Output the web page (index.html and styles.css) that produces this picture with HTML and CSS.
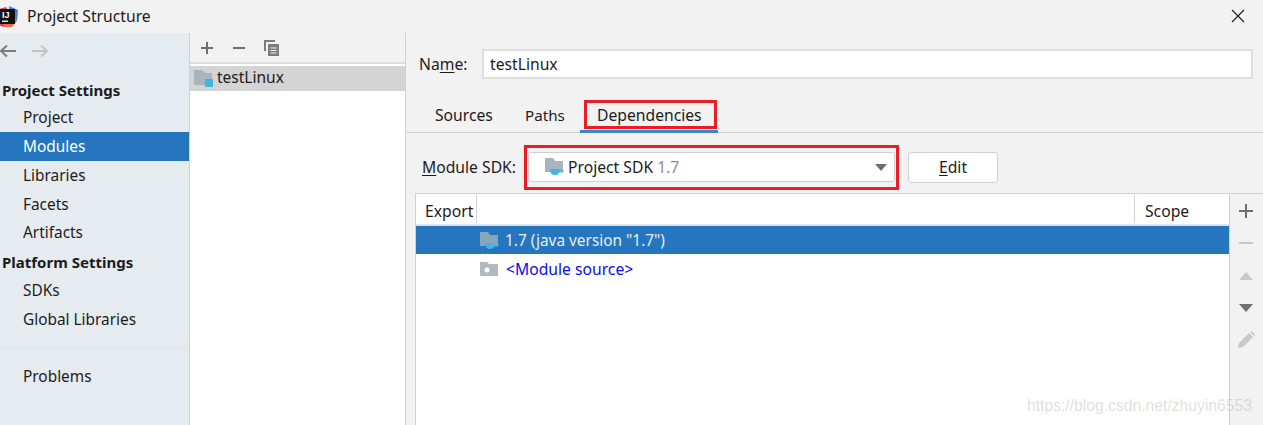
FILE: index.html
```html
<!DOCTYPE html>
<html lang="en">
<head>
<meta charset="utf-8">
<title>Project Structure</title>
<link rel="stylesheet" href="styles.css">
</head>
<body>
<div class="window">
  <header class="titlebar">
    <svg class="logo" width="18" height="22" viewBox="0 0 18 22"><path d="M-1 3 L6 1 L10 8 L3 21 L-1 19Z" fill="#e3386f"/><path d="M9 0 L18 4 L17 15 L10 8Z" fill="#3f7fe0"/><path d="M3 21 L12 21 L17 15 L10 6Z" fill="#f26a3d"/><rect x="0" y="3" width="15" height="15" fill="#111"/><text class="logo-text" x="2" y="12">IJ</text><rect x="2" y="14.500" width="6" height="1.500" fill="#ddd"/></svg>
    <span class="title">Project Structure</span>
    <svg class="close" width="14" height="14" viewBox="0 0 14 14"><path d="M1 1 L13 13 M13 1 L1 13" stroke="#222" stroke-width="1.2" fill="none"/></svg>
  </header>
  <div class="content">
    <nav class="sidebar">
      <div class="history">
        <svg width="18" height="14" viewBox="0 0 18 14"><path d="M1 7 H16 M7 1.500 L1 7 L7 12.500" stroke="#7d7d7d" stroke-width="2" fill="none"/></svg>
        <svg width="18" height="14" viewBox="0 0 18 14"><path d="M1 7 H16 M10 1.500 L16 7 L10 12.500" stroke="#c4c4c4" stroke-width="2" fill="none"/></svg>
      </div>
      <div class="nav-head">Project Settings</div>
      <div class="nav-item">Project</div>
      <div class="nav-item nav-active">Modules</div>
      <div class="nav-item">Libraries</div>
      <div class="nav-item nav-short">Facets</div>
      <div class="nav-item">Artifacts</div>
      <div class="nav-head nav-head-2">Platform Settings</div>
      <div class="nav-item">SDKs</div>
      <div class="nav-item">Global Libraries</div>
      <div class="nav-sep"></div>
      <div class="nav-item">Problems</div>
    </nav>
    <section class="modules">
      <div class="mod-toolbar">
        <svg width="14" height="14" viewBox="0 0 14 14"><path d="M7 1 V13 M1 7 H13" stroke="#6e6e6e" stroke-width="2"/></svg>
        <svg width="14" height="14" viewBox="0 0 14 14"><path d="M1 7 H13" stroke="#6e6e6e" stroke-width="2"/></svg>
        <svg width="16" height="16" viewBox="0 0 16 16"><path d="M1 11 V1 H11" stroke="#7d7d7d" stroke-width="2" fill="none"/><rect x="4" y="4" width="11" height="12" fill="#7d7d7d"/><path d="M6.500 8 H12.500 M6.500 10.500 H12.500 M6.500 13 H12.500" stroke="#f2f2f2"/></svg>
      </div>
      <div class="mod-row">
        <svg width="20" height="18" viewBox="0 0 20 18"><path d="M0 0 H8 L11 3 H18 V15 H0Z" fill="#a9b5be"/><rect x="11" y="9" width="8" height="8" fill="#40b6e0"/></svg>
        <span class="mod-name">testLinux</span>
      </div>
    </section>
    <main class="detail">
      <div class="name-row">
        <label class="name-label">Na<u>m</u>e:</label>
        <div class="name-input">testLinux</div>
      </div>
      <div class="tabs">
        <span class="tab">Sources</span>
        <span class="tab">Paths</span>
        <span class="tab tab-active">Dependencies<i class="redbox red-tab"></i></span>
      </div>
      <div class="sdk-row">
        <label class="sdk-label"><u>M</u>odule SDK:</label>
        <div class="combo">
          <i class="redbox red-combo"></i>
          <svg width="20" height="18" viewBox="0 0 20 18"><path d="M0 0 H8 L10 3 H18 V14 H0Z" fill="#a9b5be"/><path d="M5 11 H15 Q15 17 10 17 Q5 17 5 11Z" fill="#40b6e0"/><path d="M15 12 H18 V14 H15" stroke="#40b6e0" fill="none"/></svg>
          <span class="combo-text">Project SDK <span class="muted">1.7</span></span>
          <svg class="caret" width="12" height="7" viewBox="0 0 12 7"><path d="M0 0 H12 L6 7Z" fill="#6e6e6e"/></svg>
        </div>
        <div class="edit-btn"><u>E</u>dit</div>
      </div>
      <div class="table-wrap">
        <div class="table">
          <div class="thead">
            <span class="th th-export">Export</span>
            <span class="th th-main"></span>
            <span class="th th-scope">Scope</span>
          </div>
          <div class="tr tr-selected">
            <svg width="20" height="17" viewBox="0 0 20 17"><path d="M0 0 H8 L10 3 H18 V14 H0Z" fill="#8aa4bb"/><path d="M5 11 H15 Q15 17 10 17 Q5 17 5 11Z" fill="#40b6e0"/><path d="M15 12 H18 V14 H15" stroke="#40b6e0" fill="none"/></svg>
            <span class="version">1.7 (java version "1.7")</span>
          </div>
          <div class="tr tr-source">
            <svg width="18" height="14" viewBox="0 0 18 14"><path d="M0 0 H7 L9 2 H18 V14 H0Z" fill="#afb9c0"/><circle cx="7" cy="8" r="2.500" fill="#fff"/></svg>
            <span class="link">&lt;Module source&gt;</span>
          </div>
        </div>
        <div class="side-tools">
          <svg width="14" height="14" viewBox="0 0 14 14"><path d="M7 0 V14 M0 7 H14" stroke="#6e6e6e" stroke-width="2"/></svg>
          <svg width="14" height="14" viewBox="0 0 14 14"><path d="M0 7 H14" stroke="#c9c9c9" stroke-width="2"/></svg>
          <svg width="14" height="14" viewBox="0 0 14 14"><path d="M0 12 H14 L7 4Z" fill="#c9c9c9"/></svg>
          <svg width="14" height="14" viewBox="0 0 14 14"><path d="M0 4 H14 L7 12Z" fill="#6e6e6e"/></svg>
          <svg width="18" height="18" viewBox="0 0 18 18"><path d="M1 17 L2 12 L12 2 L16 6 L6 16Z M13 1 L14.500 0 L18 3.500 L17 5Z" fill="#c9c9c9"/></svg>
        </div>
      </div>
    </main>
  </div>
  <span class="watermark">https://blog.csdn.net/zhuyin6553</span>
</div>
</body>
</html>
```

FILE: styles.css
```css
* { box-sizing: border-box; }
html, body { margin: 0; height: 100%; overflow: hidden; }
body { font-family: "Noto Sans", "Open Sans", sans-serif; font-size: 15.7px; color: #1c1c1c; background: #f2f2f2; }
svg { display: block; flex: none; }
u { text-underline-offset: 2px; }

.window { position: relative; width: 1263px; height: 425px; display: flex; flex-direction: column; overflow: hidden; }

.titlebar { height: 33px; flex: none; display: flex; align-items: center; padding: 0 18px 1px 0; background: #f2f2f2; }
.logo { margin-right: 9px; margin-top: 1px; overflow: hidden; }
.logo-text { font: bold 9px "Liberation Sans", sans-serif; fill: #fff; }
.title { flex: 1; }

.content { flex: 1; display: flex; min-height: 0; }

.sidebar { width: 190px; flex: none; background: #e6ebf0; border-right: 1px solid #d1d1d1; }
.history { height: 36px; display: flex; align-items: center; gap: 13px; padding: 0 0 0 1px; margin-left: -1px; }
.nav-head { height: 26px; line-height: 27px; padding-left: 2px; margin-top: 8px; font-weight: 700; font-size: 15px; }
.nav-head-2 { margin-top: 2px; height: 27px; }
.nav-item { height: 29px; line-height: 29px; padding-left: 23px; font-size: 15.4px; }
.nav-short { height: 28px; }
.nav-active { background: #2675bf; color: #fff; }
.nav-sep { height: 1px; margin: 14px 0 13px; background: #dfe3e7; }

.modules { width: 216px; flex: none; background: #fff; border-right: 1px solid #d1d1d1; }
.mod-toolbar { height: 31px; display: flex; align-items: center; gap: 18px; padding-left: 10px; background: #f2f2f2; border-bottom: 2px solid #dcdcdc; }
.mod-row { height: 25px; margin-top: 2px; display: flex; align-items: center; gap: 3px; padding-left: 4px; background: #d4d4d4; }
.mod-name { padding-bottom: 3px; font-size: 15.5px; }

.detail { flex: 1; min-width: 0; display: flex; flex-direction: column; background: #f2f2f2; }

.name-row { display: flex; align-items: center; height: 30px; margin-top: 16px; padding: 0 10px 0 13px; }
.name-label { width: 63px; }
.name-input { flex: 1; height: 30px; line-height: 27px; padding-left: 6px; background: #fff; border: 2px solid #dedede; }

.tabs { height: 41px; margin-top: 13px; padding-left: 11px; display: flex; align-items: flex-end; border-bottom: 1px solid #d1d1d1; }
.tab { position: relative; display: block; height: 33px; line-height: 32px; padding: 0 18px; margin-right: -2px; }
.tab:first-child { width: 92px; }
.tab:nth-child(2) { width: 75px; font-size: 15.2px; }
.tab-active { width: 138px; padding: 0 17px; margin-bottom: -1px; height: 34px; border-bottom: 3px solid #3d82cc; }
.redbox { position: absolute; border: 3px solid #ec1c24; pointer-events: none; }
.red-tab { left: 4px; top: 1px; width: 133px; height: 29px; }

.sdk-row { display: flex; align-items: center; height: 30px; margin-top: 19px; padding-left: 16px; }
.sdk-label { width: 106px; padding-bottom: 1px; }
.combo { position: relative; width: 367px; height: 30px; display: flex; align-items: center; gap: 3px; padding-left: 16px; background: #fff; border: 1px solid #d0d0d0; border-radius: 3px; }
.combo-text { padding-bottom: 1px; }
.caret { position: absolute; right: 7px; top: 11px; }
.red-combo { left: -5px; top: -8px; width: 375px; height: 45px; }
.muted { color: #8c8c8c; }
.edit-btn { width: 90px; height: 31px; margin-left: 13px; line-height: 28px; text-align: center; background: #fff; border: 1px solid #d0d0d0; border-radius: 3px; }

.table-wrap { flex: 1; min-height: 0; display: flex; margin-top: 11px; padding-left: 9px; }
.table { flex: 1; min-width: 0; background: #fff; border: 1px solid #d1d1d1; border-bottom: 0; }
.thead { height: 32px; display: flex; align-items: center; border-bottom: 2px solid #dfe5ea; }
.th { display: block; height: 28px; line-height: 32px; }
.th-export { width: 61px; padding-left: 9px; border-right: 1px solid #d1d1d1; }
.th-main { flex: 1; border-right: 1px solid #d1d1d1; }
.th-scope { width: 94px; padding-left: 10px; }
.tr { display: flex; align-items: center; gap: 5px; padding-left: 64px; }
.tr-selected { height: 28px; background: #2675bf; color: #e8eef5; }
.version { font-size: 15.4px; }
.tr-source { height: 30px; }
.link { color: #0a0aee; margin-left: 3px; }

.side-tools { width: 33px; flex: none; display: flex; flex-direction: column; align-items: center; gap: 18px; padding: 10px 2px 0 0; border-top: 1px solid #d1d1d1; }
.side-tools svg:nth-child(5) { margin-top: -1px; }

.watermark { position: absolute; left: 1027px; top: 397px; font: 15.7px "Liberation Sans", sans-serif; color: rgba(170,170,170,.38); white-space: nowrap; }
```
